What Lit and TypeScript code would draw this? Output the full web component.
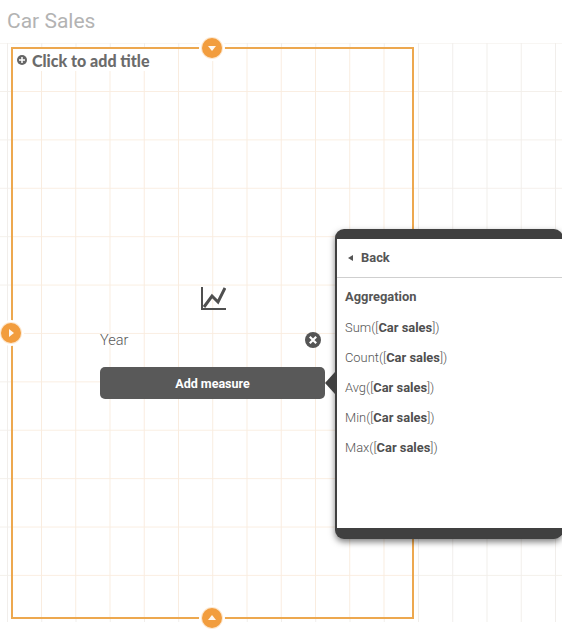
import { css, html, LitElement } from 'lit';
import { customElement } from 'lit/decorators.js';

const AGGREGATIONS = ['Sum', 'Count', 'Avg', 'Min', 'Max'];

@customElement('app-root')
export class AppRoot extends LitElement {
  static styles = css`
    :host {
      display: block;
      position: relative;
      width: 562px;
      height: 629px;
      overflow: hidden;
      background: #fff;
      font-family: Roboto, 'Liberation Sans', sans-serif;
      color: #595959;
    }

    .sheet-title {
      height: 43px;
      padding: 9px 0 0 7px;
      box-sizing: border-box;
      font-size: 21px;
      line-height: 24px;
      color: #b3b3b3;
    }

    .grid {
      height: 579px;
      padding: 4px 0 0 11px;
      box-sizing: border-box;
      background-image: linear-gradient(to right, #f1eeeb 1px, transparent 1px),
        linear-gradient(to bottom, #f4f0eb 1px, transparent 1px);
      background-size: 34.25px 48.4px;
      background-position: 7px 48px;
    }

    .frame {
      position: relative;
      display: flex;
      flex-direction: column;
      width: 403px;
      height: 572px;
      box-sizing: border-box;
      border: 2px solid #eda84f;
      background-color: #fff;
      background-image: linear-gradient(to right, #f9ecdf 1px, transparent 1px),
        linear-gradient(to bottom, #faeee2 1px, transparent 1px);
      background-size: 34.25px 48.4px;
      background-position: 28px 42px;
    }

    .handle {
      position: absolute;
      display: flex;
      align-items: center;
      justify-content: center;
      width: 20px;
      height: 20px;
      border-radius: 50%;
      background: #f29d3e;
      box-shadow: 0 0 0 1px #fde8d0, 0 0 0 3px #fff;
    }

    .handle.top {
      top: -11px;
      left: 189px;
    }

    .handle.left {
      top: 274px;
      left: -12px;
    }

    .handle.bottom {
      bottom: -11px;
      left: 189px;
    }

    .title-row {
      display: flex;
      align-items: center;
      gap: 5px;
      height: 22px;
      margin: 0 0 0 4px;
      font-family: Lato, sans-serif;
      font-size: 16px;
      font-weight: 900;
      color: #6b6b6b;
      background: #fff;
      align-self: flex-start;
      padding-right: 2px;
    }

    .body {
      display: flex;
      flex-direction: column;
      width: 225px;
      margin: 214px 0 0 87px;
    }

    .chart-icon {
      align-self: center;
      display: block;
    }

    .dimension {
      display: flex;
      align-items: center;
      justify-content: space-between;
      height: 20px;
      margin-top: 19px;
      padding-right: 4px;
      font-size: 14.5px;
      font-weight: 300;
    }

    .add-measure {
      display: flex;
      align-items: center;
      justify-content: center;
      height: 32px;
      margin-top: 17px;
      border-radius: 5px;
      background: #595959;
      color: #fff;
      font-size: 12.5px;
      font-weight: 700;
    }

    .popover {
      position: absolute;
      top: 229px;
      left: 335px;
      width: 228px;
      height: 310px;
      box-sizing: border-box;
      border-style: solid;
      border-color: #404040;
      border-width: 10px 0 11px 2px;
      border-radius: 9px;
      background: #fff;
      box-shadow: 0 3px 6px rgba(0, 0, 0, 0.5);
      font-size: 12.9px;
    }

    .arrow {
      position: absolute;
      top: 133px;
      left: -12px;
      width: 0;
      height: 0;
      border-style: solid;
      border-width: 11px 10px 11px 0;
      border-color: transparent #404040 transparent transparent;
    }

    .back {
      display: flex;
      align-items: center;
      gap: 8px;
      height: 37px;
      padding: 0 0 1px 11px;
      border-bottom: 1px solid #cfcfcf;
      font-weight: 700;
      color: #555;
    }

    .back i {
      width: 0;
      height: 0;
      border-style: solid;
      border-width: 3px 5px 3px 0;
      border-color: transparent #555 transparent transparent;
    }

    .heading {
      margin: 11px 0 0 8px;
      height: 16px;
      line-height: 16px;
      font-weight: 700;
      color: #555;
    }

    .items {
      display: flex;
      flex-direction: column;
      gap: 14px;
      margin: 15px 0 0 8px;
    }

    .item {
      height: 16px;
      line-height: 16px;
      font-weight: 300;
      color: #555;
    }

    .item b {
      font-weight: 700;
      color: #4f4f4f;
    }
  `;

  private triangle(points: string) {
    return html`<svg width="10" height="10" viewBox="0 0 10 10">
      <polygon points=${points} fill="#fff" opacity="0.92" />
    </svg>`;
  }

  render() {
    return html`
      <div class="sheet-title">Car Sales</div>
      <div class="grid">
        <div class="frame">
          <div class="handle top">${this.triangle('1,3 9,3 5,8')}</div>
          <div class="handle left">${this.triangle('3,1 8,5 3,9')}</div>
          <div class="handle bottom">${this.triangle('1,7 9,7 5,2')}</div>
          <div class="title-row">
            <svg width="10" height="10" viewBox="0 0 10 10">
              <circle cx="5" cy="5" r="5" fill="#666" />
              <path d="M2 5h6M5 2v6" stroke="#fff" stroke-width="1.5" />
            </svg>
            Click to add title
          </div>
          <div class="body">
            <svg class="chart-icon" width="26" height="26" viewBox="0 0 26 26">
              <path d="M2 2v22h24" fill="none" stroke="#4f4f4f" stroke-width="2" />
              <path d="M4 22l8-11 6 6 7-14" fill="none" stroke="#4f4f4f" stroke-width="3" />
            </svg>
            <div class="dimension">
              Year
              <svg width="16" height="16" viewBox="0 0 16 16">
                <circle cx="8" cy="8" r="8" fill="#555" />
                <path d="M4.800 4.800l6.400 6.400M11.200 4.800l-6.400 6.400" stroke="#fff" stroke-width="2.200" />
              </svg>
            </div>
            <div class="add-measure">Add measure</div>
          </div>
        </div>
      </div>
      <div class="popover">
        <div class="arrow"></div>
        <div class="back"><i></i>Back</div>
        <div class="heading">Aggregation</div>
        <div class="items">
          ${AGGREGATIONS.map((name) => html`<div class="item">${name}([<b>Car sales</b>])</div>`)}
        </div>
      </div>
    `;
  }
}
